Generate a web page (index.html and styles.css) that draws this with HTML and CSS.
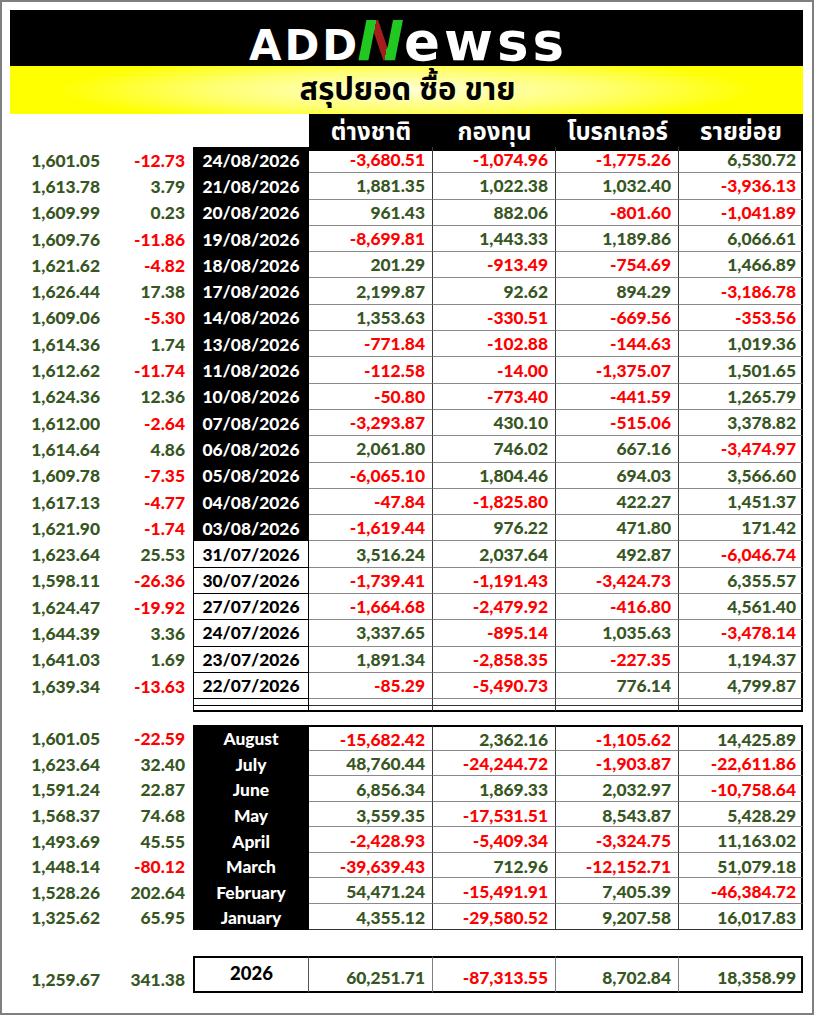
FILE: index.html
```html
<!DOCTYPE html>
<html lang="th">
<head>
<meta charset="utf-8">
<title>ADDNewss สรุปยอด ซื้อ ขาย</title>
<link rel="stylesheet" href="styles.css">
</head>
<body>
<div class="sheet">
  <div class="logo-bar">
    <div class="logo"><span class="l-add">ADD</span><span class="l-n">N</span><span class="l-ewss">ewss</span></div>
  </div>
  <div class="title-bar"><span class="title">สรุปยอด ซื้อ ขาย</span></div>

  <div class="row head">
    <div class="blank"></div>
    <div class="h">ต่างชาติ</div>
    <div class="h">กองทุน</div>
    <div class="h">โบรกเกอร์</div>
    <div class="h">รายย่อย</div>
  </div>

  <div class="daily" id="daily"></div>

  <div class="row mini"><div class="c"></div><div class="c"></div><div class="dt w"></div><div class="d"></div><div class="d"></div><div class="d"></div><div class="d last"></div></div>
  <div class="row mini end"><div class="c"></div><div class="c"></div><div class="dt w"></div><div class="d"></div><div class="d"></div><div class="d"></div><div class="d last"></div></div>

  <div class="months" id="months"></div>

  <div class="row tot">
    <div class="c g">1,259.67</div>
    <div class="c chg g">341.38</div>
    <div class="dt tw">2026</div>
    <div class="d g">60,251.71</div>
    <div class="d r">-87,313.55</div>
    <div class="d g">8,702.84</div>
    <div class="d last g">18,358.99</div>
  </div>
</div>
<script src="app.js"></script>
</body>
</html>
```

FILE: styles.css
```css
html, body {
  margin: 0;
  padding: 0;
  background: #fff;
}

.sheet {
  width: 814px;
  height: 1015px;
  box-sizing: border-box;
  border: 2px solid #7f7f7f;
  padding: 8px 9px 0 8px;
  background: #fff;
  font-family: Lato, "Liberation Sans", sans-serif;
  font-weight: 900;
}

/* logo bar */
.logo-bar {
  height: 56px;
  background: #000;
  display: flex;
  align-items: center;
  justify-content: center;
}
.logo {
  font-family: "DejaVu Sans", sans-serif;
  font-weight: 700;
  color: #fff;
  line-height: 1;
  white-space: nowrap;
  display: flex;
  align-items: baseline;
  padding-top: 6px;
  padding-left: 4px;
}
.l-add {
  font-size: 42px;
  letter-spacing: 3px;
}
.l-n {
  font-size: 56px;
  font-style: italic;
  margin: 0 0 0 -3px;
  background: linear-gradient(100deg, #22c822 0 36%, #a51e1e 36% 63%, #22c822 63% 100%);
  -webkit-background-clip: text;
  background-clip: text;
  color: transparent;
}
.l-ewss {
  font-size: 53px;
  letter-spacing: 4px;
}

/* title bar */
.title-bar {
  height: 48px;
  background: radial-gradient(ellipse 55% 90% at 50% 50%, #ffffd8 0%, #ffff70 45%, #ffff00 80%);
  display: flex;
  align-items: center;
  justify-content: center;
}
.title {
  font-family: "Noto Sans Thai", "Noto Sans Thai Looped", Loma, Garuda, "Tlwg Typo", "Noto Sans", sans-serif;
  font-size: 31px;
  font-weight: 700;
  color: #000;
  padding-left: 2px;
}

/* table rows */
.row {
  display: grid;
  grid-template-columns: 93px 90px 116px 124px 123px 123px 124px;
  height: 26.3px;
}
.row > div {
  box-sizing: border-box;
  display: flex;
  align-items: center;
  white-space: nowrap;
  font-size: 17.4px;
}

.head {
  height: 33px;
  grid-template-columns: 299px 124px 123px 123px 124px;
}
.head .h {
  background: #000;
  color: #fff;
  justify-content: center;
  font-family: "Noto Sans Thai", "Noto Sans Thai Looped", Loma, Garuda, "Tlwg Typo", "Noto Sans", sans-serif;
  font-weight: 700;
  font-size: 24px;
  padding-top: 1px;
}

.c {
  justify-content: flex-end;
  padding-right: 3px;
}
.c.chg {
  padding-right: 8px;
}

.dt {
  justify-content: center;
  background: #000;
  color: #fff;
}
.dt.w {
  background: #fff;
  color: #000;
  border-left: 1px solid #000;
  border-right: 1px solid #000;
  border-bottom: 1px solid #000;
}

.d {
  justify-content: flex-end;
  padding-right: 7px;
  border-bottom: 1px solid #8a8a8a;
  border-right: 1px solid #3a3a3a;
}
.d.last {
  border-right: 2px solid #000;
  padding-right: 5px;
}

.g { color: #375623; }
.r { color: #ff0000; }

/* filler rows */
.row.mini {
  height: 6.6px;
}
.row.mini .d {
  border-bottom-color: #333;
}
.row.mini.end .d,
.row.mini.end .dt {
  border-bottom: 2px solid #000;
}

/* months */
.months {
  margin-top: 12.5px;
}
.row.m {
  height: 25.6px;
}
.row.m > div {
  padding-top: 2px;
}
.row.m.first .d {
  border-top: 2px solid #000;
}
.row.m.lastrow .d {
  border-bottom: 1px solid #333;
}

/* total */
.row.tot {
  margin-top: 26px;
  height: 37px;
}
.row.tot > div {
  align-items: flex-end;
  padding-bottom: 3px;
}
.row.tot .d {
  border-top: 2px solid #000;
  border-bottom: 2px solid #000;
  border-right: 1px solid #808080;
}
.row.tot .d.last {
  border-right: 2px solid #000;
}
.row.tot .dt.tw {
  background: #fff;
  color: #000;
  border: 2px solid #000;
  border-right: 1px solid #555;
  align-items: center;
  padding-bottom: 2px;
  font-size: 18.5px;
}
```

FILE: app.js
```javascript
var daily = [
  ["1,601.05","-12.73","24/08/2026","-3,680.51","-1,074.96","-1,775.26","6,530.72",1],
  ["1,613.78","3.79","21/08/2026","1,881.35","1,022.38","1,032.40","-3,936.13",1],
  ["1,609.99","0.23","20/08/2026","961.43","882.06","-801.60","-1,041.89",1],
  ["1,609.76","-11.86","19/08/2026","-8,699.81","1,443.33","1,189.86","6,066.61",1],
  ["1,621.62","-4.82","18/08/2026","201.29","-913.49","-754.69","1,466.89",1],
  ["1,626.44","17.38","17/08/2026","2,199.87","92.62","894.29","-3,186.78",1],
  ["1,609.06","-5.30","14/08/2026","1,353.63","-330.51","-669.56","-353.56",1],
  ["1,614.36","1.74","13/08/2026","-771.84","-102.88","-144.63","1,019.36",1],
  ["1,612.62","-11.74","11/08/2026","-112.58","-14.00","-1,375.07","1,501.65",1],
  ["1,624.36","12.36","10/08/2026","-50.80","-773.40","-441.59","1,265.79",1],
  ["1,612.00","-2.64","07/08/2026","-3,293.87","430.10","-515.06","3,378.82",1],
  ["1,614.64","4.86","06/08/2026","2,061.80","746.02","667.16","-3,474.97",1],
  ["1,609.78","-7.35","05/08/2026","-6,065.10","1,804.46","694.03","3,566.60",1],
  ["1,617.13","-4.77","04/08/2026","-47.84","-1,825.80","422.27","1,451.37",1],
  ["1,621.90","-1.74","03/08/2026","-1,619.44","976.22","471.80","171.42",1],
  ["1,623.64","25.53","31/07/2026","3,516.24","2,037.64","492.87","-6,046.74",0],
  ["1,598.11","-26.36","30/07/2026","-1,739.41","-1,191.43","-3,424.73","6,355.57",0],
  ["1,624.47","-19.92","27/07/2026","-1,664.68","-2,479.92","-416.80","4,561.40",0],
  ["1,644.39","3.36","24/07/2026","3,337.65","-895.14","1,035.63","-3,478.14",0],
  ["1,641.03","1.69","23/07/2026","1,891.34","-2,858.35","-227.35","1,194.37",0],
  ["1,639.34","-13.63","22/07/2026","-85.29","-5,490.73","776.14","4,799.87",0]
];

var months = [
  ["1,601.05","-22.59","August","-15,682.42","2,362.16","-1,105.62","14,425.89"],
  ["1,623.64","32.40","July","48,760.44","-24,244.72","-1,903.87","-22,611.86"],
  ["1,591.24","22.87","June","6,856.34","1,869.33","2,032.97","-10,758.64"],
  ["1,568.37","74.68","May","3,559.35","-17,531.51","8,543.87","5,428.29"],
  ["1,493.69","45.55","April","-2,428.93","-5,409.34","-3,324.75","11,163.02"],
  ["1,448.14","-80.12","March","-39,639.43","712.96","-12,152.71","51,079.18"],
  ["1,528.26","202.64","February","54,471.24","-15,491.91","7,405.39","-46,384.72"],
  ["1,325.62","65.95","January","4,355.12","-29,580.52","9,207.58","16,017.83"]
];

function cls(v) {
  return v.charAt(0) === "-" ? "r" : "g";
}

function buildRow(r, rowClass, dateWhite) {
  var row = document.createElement("div");
  row.className = "row " + rowClass;
  var html = "";
  html += '<div class="c ' + cls(r[0]) + '">' + r[0] + "</div>";
  html += '<div class="c chg ' + cls(r[1]) + '">' + r[1] + "</div>";
  html += '<div class="dt' + (dateWhite ? " w" : "") + '">' + r[2] + "</div>";
  for (var i = 3; i < 7; i++) {
    html += '<div class="d ' + (i === 6 ? "last " : "") + cls(r[i]) + '">' + r[i] + "</div>";
  }
  row.innerHTML = html;
  return row;
}

var dailyBox = document.getElementById("daily");
daily.forEach(function (r) {
  dailyBox.appendChild(buildRow(r, "day", r[7] === 0));
});

var monthBox = document.getElementById("months");
months.forEach(function (r, i) {
  var c = "m" + (i === 0 ? " first" : "") + (i === months.length - 1 ? " lastrow" : "");
  monthBox.appendChild(buildRow(r, c, false));
});
```
